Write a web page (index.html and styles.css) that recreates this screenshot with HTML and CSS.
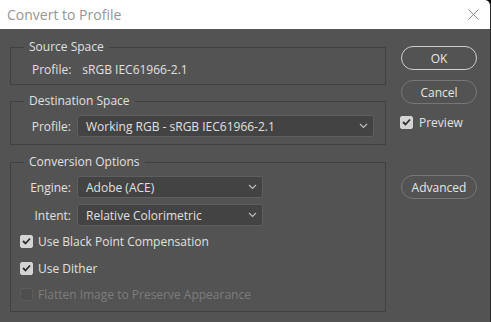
FILE: index.html
```html
<!DOCTYPE html>
<html lang="en">
<head>
    <meta charset="UTF-8">
    <meta name="viewport" content="width=device-width, initial-scale=1.0">
    <title>Convert to Profile</title>
    <link rel="stylesheet" href="styles.css">
</head>
<body>
    <div class="dialog">
        <div class="titlebar">
            <span class="title">Convert to Profile</span>
            <svg class="close" width="11" height="11" viewBox="0 0 11 11">
                <path d="M0.5 0.5 L10.5 10.5 M10.5 0.5 L0.5 10.5" stroke="#8c8c8c" stroke-width="1" fill="none"/>
            </svg>
        </div>

        <div class="content">
            <div class="left">
                <fieldset class="group source">
                    <legend>Source Space</legend>
                    <div class="static-row">
                        <span>Profile:</span>
                        <span class="value">sRGB IEC61966-2.1</span>
                    </div>
                </fieldset>

                <fieldset class="group dest">
                    <legend>Destination Space</legend>
                    <div class="field-row">
                        <label class="field-label">Profile:</label>
                        <div class="select wide">
                            <span>Working RGB - sRGB IEC61966-2.1</span>
                            <svg class="chev" width="9" height="6" viewBox="0 0 9 6"><path d="M1 1 L4.5 4.5 L8 1" stroke="#bdbdbd" stroke-width="1.2" fill="none"/></svg>
                        </div>
                    </div>
                </fieldset>

                <fieldset class="group options">
                    <legend>Conversion Options</legend>
                    <div class="field-row">
                        <label class="field-label">Engine:</label>
                        <div class="select">
                            <span>Adobe (ACE)</span>
                            <svg class="chev" width="9" height="6" viewBox="0 0 9 6"><path d="M1 1 L4.5 4.5 L8 1" stroke="#bdbdbd" stroke-width="1.2" fill="none"/></svg>
                        </div>
                    </div>
                    <div class="field-row intent">
                        <label class="field-label">Intent:</label>
                        <div class="select">
                            <span>Relative Colorimetric</span>
                            <svg class="chev" width="9" height="6" viewBox="0 0 9 6"><path d="M1 1 L4.5 4.5 L8 1" stroke="#bdbdbd" stroke-width="1.2" fill="none"/></svg>
                        </div>
                    </div>
                    <div class="check-row bpc">
                        <span class="box checked"><svg width="9" height="8" viewBox="0 0 9 8"><path d="M1 4 L3.5 6.5 L8 1.5" stroke="#2e2e2e" stroke-width="1.8" fill="none"/></svg></span>
                        <span>Use Black Point Compensation</span>
                    </div>
                    <div class="check-row dither">
                        <span class="box checked"><svg width="9" height="8" viewBox="0 0 9 8"><path d="M1 4 L3.5 6.5 L8 1.5" stroke="#2e2e2e" stroke-width="1.8" fill="none"/></svg></span>
                        <span>Use Dither</span>
                    </div>
                    <div class="check-row flatten disabled">
                        <span class="box"></span>
                        <span>Flatten Image to Preserve Appearance</span>
                    </div>
                </fieldset>
            </div>

            <div class="right">
                <button class="btn primary">OK</button>
                <button class="btn">Cancel</button>
                <div class="check-row preview">
                    <span class="box checked"><svg width="9" height="8" viewBox="0 0 9 8"><path d="M1 4 L3.5 6.5 L8 1.5" stroke="#2e2e2e" stroke-width="1.8" fill="none"/></svg></span>
                    <span>Preview</span>
                </div>
                <button class="btn advanced">Advanced</button>
            </div>
        </div>
    </div>
</body>
</html>
```

FILE: styles.css
```css
body {
    margin: 0;
    background: #000000;
    font-family: "Open Sans", "Noto Sans", sans-serif;
    font-size: 12px;
    color: #e0e0e0;
}
.dialog {
    width: 490px;
    height: 322px;
    background: #535353;
    border-right: 1px solid #2a2a2a;
    border-top-right-radius: 6px;
    overflow: hidden;
}
.titlebar {
    height: 29px;
    background: #ffffff;
    display: flex;
    align-items: center;
    justify-content: space-between;
    padding: 0 11px 0 7px;
}
.title {
    font-size: 14px;
    color: #959595;
}
.content {
    display: flex;
    padding: 10px 13px 0 10px;
    gap: 15px;
}
.left {
    width: 376px;
    display: flex;
    flex-direction: column;
}
.group {
    margin: 0;
    border: 1px solid #414141;
    padding: 0 10px;
}
legend {
    margin-left: 3px;
    padding: 0 5px;
    line-height: 16px;
}
.source {
    padding-top: 7px;
    padding-bottom: 6px;
}
.static-row {
    display: flex;
    gap: 11px;
    line-height: 16px;
    margin-left: 11px;
}
.dest {
    margin-top: 8px;
    padding-top: 6px;
    padding-bottom: 7px;
}
.options {
    margin-top: 9px;
    padding-top: 6px;
    padding-bottom: 9px;
}
.field-row {
    display: flex;
    align-items: center;
    gap: 6px;
}
.intent {
    margin-top: 6px;
}
.field-label {
    width: 50px;
    text-align: right;
}
.select {
    width: 186px;
    height: 22px;
    box-sizing: border-box;
    border: 1px solid #5e5e5e;
    border-radius: 3px;
    background: #434343;
    display: flex;
    align-items: center;
    justify-content: space-between;
    padding: 0 5px 0 8px;
}
.select.wide {
    width: 297px;
}
.check-row {
    display: flex;
    align-items: center;
    gap: 5px;
    height: 16px;
    margin-left: -1px;
}
.bpc {
    margin-top: 7px;
}
.dither {
    margin-top: 11px;
}
.flatten {
    margin-top: 10px;
}
.box {
    width: 13px;
    height: 13px;
    box-sizing: border-box;
    border-radius: 2px;
    background: #4e4e4e;
    border: 1px solid #5c5c5c;
    display: flex;
    align-items: center;
    justify-content: center;
}
.box.checked {
    background: #d4d4d4;
    border-color: #d4d4d4;
}
.disabled {
    color: #7c7c7c;
}
.right {
    width: 76px;
    display: flex;
    flex-direction: column;
    padding-top: 7px;
}
.btn {
    height: 24px;
    border-radius: 12px;
    border: 1px solid #777777;
    background: transparent;
    color: #e6e6e6;
    font-family: inherit;
    font-size: 12px;
    margin-bottom: 10px;
    padding: 0;
}
.btn.primary {
    border: 1.5px solid #cfcfcf;
}
.preview {
    margin: 0 0 0 -1px;
    gap: 6px;
}
.btn.advanced {
    margin-top: 45px;
}
```
